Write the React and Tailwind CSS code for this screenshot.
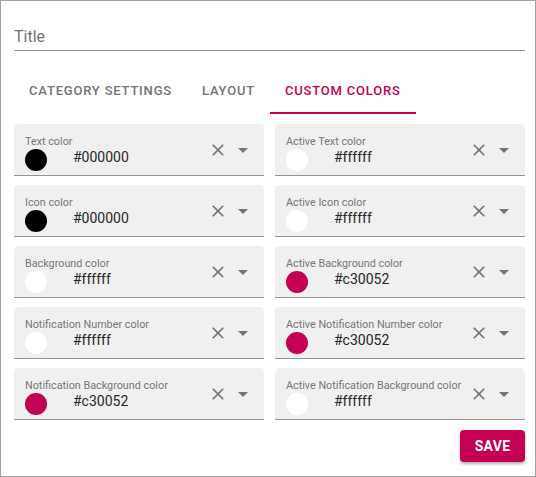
import { useState } from "react";

const fields = [
  { label: "Text color", value: "#000000" },
  { label: "Active Text color", value: "#ffffff" },
  { label: "Icon color", value: "#000000" },
  { label: "Active Icon color", value: "#ffffff" },
  { label: "Background color", value: "#ffffff" },
  { label: "Active Background color", value: "#c30052" },
  { label: "Notification Number color", value: "#ffffff" },
  { label: "Active Notification Number color", value: "#c30052" },
  { label: "Notification Background color", value: "#c30052" },
  { label: "Active Notification Background color", value: "#ffffff" },
];

const tabs = ["Category settings", "Layout", "Custom colors"];

function ColorField({ label, value }) {
  return (
    <div className="flex h-[52px] rounded-t-[4px] border-b border-[#949494] bg-[#f0f0f0]">
      <div className="flex-1 pl-[11px] pt-[11px]">
        <div className="text-[10.8px] leading-[13px] text-[#767676] whitespace-nowrap">{label}</div>
        <div className="mt-[1px] flex items-start">
          <div
            className="h-[22px] w-[22px] shrink-0 rounded-full"
            style={{ backgroundColor: value }}
          />
          <div className="ml-[26px] text-[14px] leading-[16px] text-[#262626]">{value}</div>
        </div>
      </div>
      <div className="flex items-center pr-[9px]">
        <svg viewBox="0 0 24 24" className="h-[20px] w-[20px] fill-[#757575]">
          <path d="M19 6.41L17.59 5 12 10.59 6.41 5 5 6.41 10.59 12 5 17.59 6.41 19 12 13.41 17.59 19 19 17.59 13.41 12z" />
        </svg>
        <svg viewBox="0 0 24 24" className="ml-[3px] h-[24px] w-[24px] fill-[#757575]">
          <path d="M7 10l5 5 5-5z" />
        </svg>
      </div>
    </div>
  );
}

export default function App() {
  const [active, setActive] = useState(2);

  return (
    <div className="h-[477px] w-[536px] border border-[#a3a3a3] bg-white font-['Roboto',sans-serif]">
      <div className="pl-[13px] pr-[10px] pt-[26px]">
        <div className="border-b border-[#949494] pb-[4px]">
          <div className="text-[16px] leading-[19px] text-[#757575]">Title</div>
        </div>

        <div className="mt-[15px] flex h-[48px]">
          {tabs.map((t, i) => (
            <button
              key={t}
              onClick={() => setActive(i)}
              className={
                "h-[48px] px-[15px] pt-[4px] border-b-2 text-[13px] font-medium uppercase tracking-[0.8px] " +
                (i === active ? "border-[#c30052] text-[#c30052]" : "border-transparent text-[#737373]")
              }
            >
              {t}
            </button>
          ))}
        </div>

        <div className="mt-[10px] grid grid-cols-2 gap-x-[11px] gap-y-[9px]">
          {fields.map((f) => (
            <ColorField key={f.label} label={f.label} value={f.value} />
          ))}
        </div>

        <div className="mt-[10px] flex justify-end">
          <button className="h-[32px] w-[65px] rounded-[4px] bg-[#c30052] text-[14px] font-bold uppercase tracking-[0.3px] text-white shadow-[0_2px_3px_rgba(0,0,0,0.3)]">
            Save
          </button>
        </div>
      </div>
    </div>
  );
}
